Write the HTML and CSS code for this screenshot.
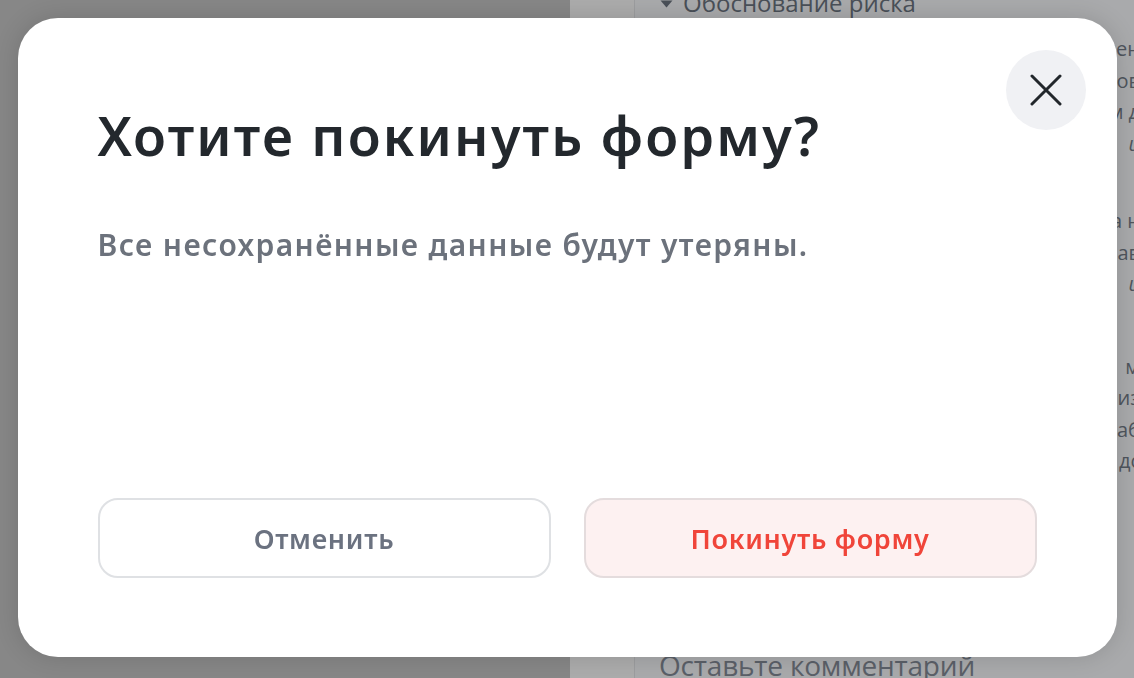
FILE: index.html
```html
<!DOCTYPE html>
<html lang="ru">
<head>
<meta charset="UTF-8">
<title>Выход из формы</title>
<link rel="stylesheet" href="styles.css">
</head>
<body>
	<!-- страница под затемнением -->
	<div class="page">
		<div class="side"></div>
		<div class="gutter"></div>
		<div class="pane">
			<div class="pane-head"><svg class="caret" width="13" height="8" viewBox="0 0 13 8"><path d="M0.5 0.5 H12.5 L6.5 7.5 Z" fill="#4a5058"/></svg>Обоснование риска</div>
			<div class="group g1">
				<p>Обоснование изменен</p>
				<p>с учётом новых показателей ов</p>
				<p>и в соответствии с регламентом д</p>
				<p class="it">и</p>
			</div>
			<div class="group g2">
				<p>Мнение экспертного совета н</p>
				<p>по результатам анализа ав</p>
				<p class="it">и</p>
			</div>
			<div class="group g3">
				<p>м</p>
				<p>из</p>
				<p>аб</p>
				<p>дс</p>
			</div>
			<div class="comment">Оставьте комментарий</div>
		</div>
	</div>

	<div class="overlay">
		<div class="modal">
			<button type="button" class="close" title="Закрыть">
				<svg width="32" height="32" viewBox="0 0 32 32"><path d="M2 2 L30 30 M30 2 L2 30" stroke="#22272b" stroke-width="3" stroke-linecap="round" fill="none"/></svg>
			</button>
			<h1 class="title">Хотите покинуть форму?</h1>
			<p class="text">Все несохранённые данные будут утеряны.</p>
			<div class="actions">
				<button type="button" class="btn btn-cancel">Отменить</button>
				<button type="button" class="btn btn-leave">Покинуть форму</button>
			</div>
		</div>
	</div>
</body>
</html>
```

FILE: styles.css
```css
* { padding: 0; margin: 0; box-sizing: border-box; }
html, body { height: 100%; overflow: hidden; }
body { font-family: "Open Sans", "Noto Sans", sans-serif; background: #878787; }

/* фон страницы (уже затемнённый) */
.page { display: flex; height: 100%; }
.side { width: 570px; background: #878787; }
.gutter { width: 64px; background: #acacac; }
.pane { flex: 1; position: relative; background: #a9aaac; border-left: 1px solid #9c9d9f; color: #4f555d; font-size: 20px; overflow: hidden; }
.pane-head { margin-top: -13px; padding-left: 25px; font-size: 24px; font-weight: 500; line-height: 32px; color: #4a5058; }
.caret { margin-right: 10px; vertical-align: 4px; }
.group { text-align: right; margin-right: -6px; line-height: 31.5px; }
.group p { white-space: nowrap; }
.group .it { font-style: italic; }
.g1 { margin-top: 14px; }
.g2 { margin-top: 46px; }
.g3 { margin-top: 51px; }
.comment { position: absolute; left: 24px; top: 646px; font-size: 28px; color: #5b6068; letter-spacing: -0.2px; }

/* модальное окно */
.overlay { position: fixed; inset: 0; display: flex; align-items: center; justify-content: center; }
.modal { position: relative; width: 1099px; height: 639px; margin-bottom: 3px; background: #fff; border-radius: 40px; box-shadow: 0 0 24px rgba(0, 0, 0, 0.15); padding: 86px 80px 79px 80px; display: flex; flex-direction: column; font-family: "Noto Sans", "Open Sans", sans-serif; }
.close { position: absolute; top: 32px; right: 31px; width: 80px; height: 80px; border: none; border-radius: 50%; background: #f0f1f4; display: flex; align-items: center; justify-content: center; cursor: pointer; }
.title { font-size: 54px; font-weight: 600; line-height: 62px; letter-spacing: 2.2px; color: #23282d; }
.text { margin-top: 59px; font-size: 30px; font-weight: 600; line-height: 40px; letter-spacing: 1.4px; color: #6c727c; }
.actions { margin-top: auto; display: grid; grid-template-columns: 1fr 1fr; gap: 33px; }
.btn { height: 80px; border-radius: 20px; font-family: inherit; font-size: 27px; font-weight: 600; letter-spacing: 0.7px; cursor: pointer; }
.btn-cancel { background: #fff; border: 2px solid #dfe1e4; color: #6b7280; }
.btn-leave { background: #fdf1f1; border: 2px solid #e4dcdd; color: #f0453a; }
```
